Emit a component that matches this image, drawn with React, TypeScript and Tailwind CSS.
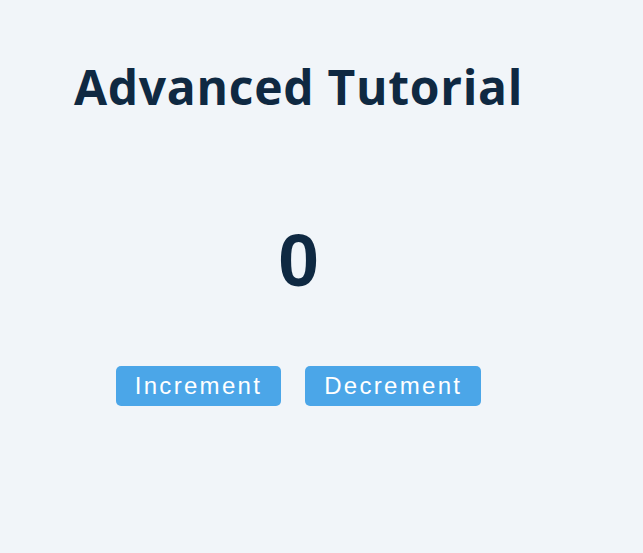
import { useState } from "react"

const App = () => {
  const [count, setCount] = useState(0)

  return (
    <div className="min-h-screen w-full bg-[#f1f5f9]">
      <div className="w-[597px] flex flex-col items-center pt-[52px]">
        <h1 className="text-[48px] font-bold leading-[70px] tracking-[0.7px] text-[#0f2942] font-['Open_Sans',sans-serif]">
          Advanced Tutorial
        </h1>
        <div className="mt-[99px] text-[74px] leading-[80px] font-bold text-[#0f2942] font-['Liberation_Sans',Arial,sans-serif]">
          {count}
        </div>
        <div className="mt-[65px] flex gap-6 font-['Liberation_Sans',Arial,sans-serif]">
          <button
            onClick={() => setCount(count + 1)}
            className="h-10 px-[19px] rounded-[5px] bg-[#4ba6e8] text-white text-[24px] leading-10 tracking-[2.3px]"
          >
            Increment
          </button>
          <button
            onClick={() => setCount(count - 1)}
            className="h-10 px-[19px] rounded-[5px] bg-[#4ba6e8] text-white text-[24px] leading-10 tracking-[2.3px]"
          >
            Decrement
          </button>
        </div>
      </div>
    </div>
  )
}

export default App
